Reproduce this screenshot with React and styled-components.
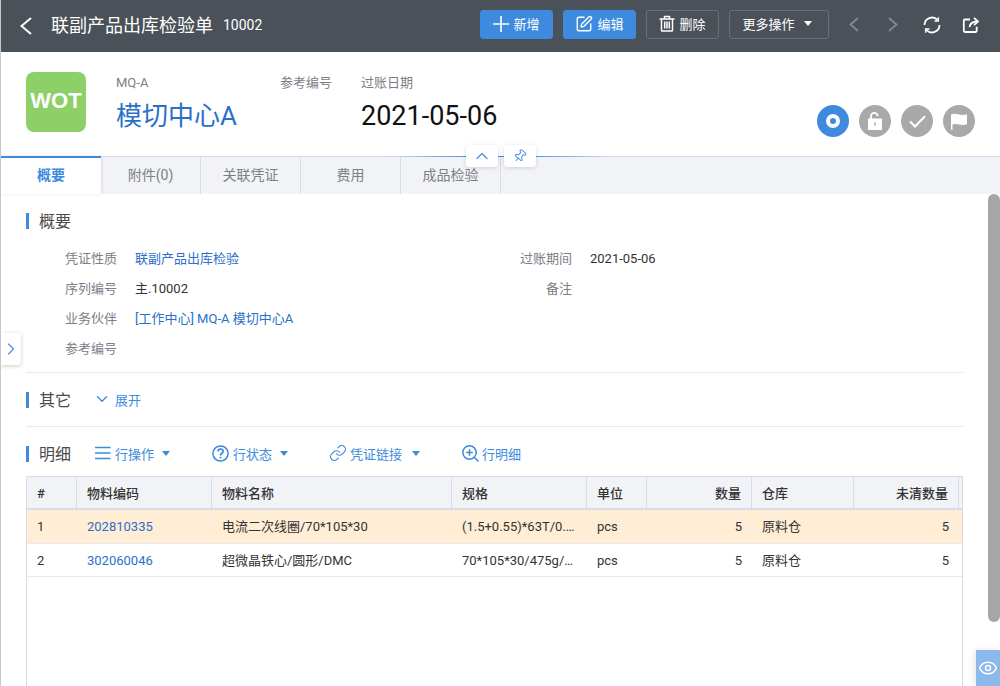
import styled, { createGlobalStyle } from 'styled-components';
import { ChevronDown, ChevronRight, ChevronUp, Eye, Link, Pin, SquarePen } from 'lucide-react';

const GlobalStyle = createGlobalStyle`
  html, body {
    margin: 0;
    padding: 0;
    height: 100%;
    overflow: hidden;
    background: #fff;
  }
  * { box-sizing: border-box; }
  body {
    font-family: Roboto, "Noto Sans CJK SC", sans-serif;
    font-size: 13px;
    color: #333;
  }
`;

const Page = styled.div`
  position: relative;
  display: flex;
  flex-direction: column;
  height: 686px;
  overflow: hidden;
  border-left: 1px solid #c8c8c8;
`;

const TopBar = styled.header`
  display: flex;
  align-items: center;
  flex: none;
  height: 52px;
  padding-left: 19px;
  background: #4b5159;
  color: #fff;
`;

const BackLink = styled.span`
  display: flex;
  width: 31px;
  color: #fff;
`;

const DocTitle = styled.h1`
  margin: 0;
  font-size: 18px;
  font-weight: 400;
  line-height: 50px;
`;

const DocNumber = styled.span`
  margin-left: 10px;
  margin-bottom: 2px;
  flex: 1;
  font-size: 14px;
`;

const TopButton = styled.button`
  display: flex;
  align-items: center;
  justify-content: center;
  gap: 4px;
  width: ${p => p.$width}px;
  height: 29px;
  margin: 0 10px 3px 0;
  padding: 0 ${p => p.$trim || 0}px 2px 0;
  border: 1px solid ${p => (p.$primary ? '#3d8ade' : '#6a7078')};
  border-radius: 3px;
  background: ${p => (p.$primary ? '#3d8ade' : 'transparent')};
  color: #fff;
  font-family: inherit;
  font-size: 13px;
`;

const Caret = styled.i`
  display: inline-block;
  width: 0;
  height: 0;
  margin-left: ${p => p.$gap || 4}px;
  border-left: 4px solid transparent;
  border-right: 4px solid transparent;
  border-top: 5px solid ${p => p.$color || '#fff'};
`;

const TopIcons = styled.div`
  display: flex;
  align-items: center;
  margin-left: 5px;
  padding-right: 19px;
  gap: 19px;
  margin-bottom: 3px;
`;

const TopIcon = styled.span`
  display: flex;
  width: 20px;
  justify-content: center;
  color: ${p => (p.$dim ? '#868a90' : '#fff')};
`;

const Hero = styled.section`
  position: relative;
  display: flex;
  flex: none;
  height: 104px;
  padding: 20px 25px 0;
`;

const Logo = styled.div`
  display: flex;
  align-items: center;
  justify-content: center;
  width: 60px;
  height: 60px;
  margin-right: 30px;
  padding-bottom: 2px;
  border-radius: 8px;
  background: #8dd068;
  color: #fff;
  font-family: "Liberation Sans", Arial, sans-serif;
  font-size: 22px;
  font-weight: 700;
`;

const HeroColumn = styled.div`
  width: ${p => p.$width}px;
`;

const HeroLabel = styled.div`
  height: 22px;
  line-height: 22px;
  font-size: 13px;
  color: #7b8088;
`;

const HeroValue = styled.div`
  margin-top: 6px;
  height: 32px;
  line-height: 32px;
  font-size: ${p => p.$size || 26}px;
  white-space: nowrap;
  color: ${p => (p.$link ? '#2a6fc9' : '#111')};
`;

const StatusList = styled.div`
  display: flex;
  gap: 10px;
  margin-left: auto;
  padding-top: 33px;
`;

const StatusDot = styled.span`
  display: flex;
  align-items: center;
  justify-content: center;
  width: 32px;
  height: 32px;
  border-radius: 50%;
  background: ${p => (p.$active ? '#3d8ade' : '#a9a9a9')};
`;

const HeroTools = styled.div`
  position: absolute;
  left: 465px;
  bottom: -11px;
  z-index: 3;
  display: flex;
  gap: 6px;
`;

const HeroTool = styled.span`
  display: flex;
  align-items: center;
  justify-content: center;
  width: 32px;
  height: 22px;
  border-radius: 3px;
  background: #fff;
  box-shadow: 0 1px 4px rgba(0, 0, 0, 0.14);
  color: #4a90e2;
`;

const TabBar = styled.nav`
  position: relative;
  display: flex;
  flex: none;
  height: 38px;
  background: #f2f3f7;
  border-top: 1px solid #d8dce8;
  &::before {
    content: '';
    position: absolute;
    left: 385px;
    top: -1px;
    width: 225px;
    height: 1px;
    background: linear-gradient(to right, rgba(61, 138, 222, 0) 0, #3d8ade 40%, #3d8ade 62%, rgba(61, 138, 222, 0) 100%);
  }
`;

const Tab = styled.span`
  position: relative;
  width: 100px;
  text-align: center;
  line-height: 37px;
  font-size: 14px;
  color: #7b8088;
  border-right: 1px solid #d8dce8;
`;

const ActiveTab = styled(Tab)`
  height: 38px;
  margin-top: -1px;
  border-top: 2px solid #3d8ade;
  border-right: 0;
  background: #fff;
  box-shadow: 1px 0 3px rgba(0, 0, 0, 0.1);
  font-weight: 700;
  line-height: 35px;
  color: #3d8ade;
`;

const Content = styled.main`
  display: flex;
  flex-direction: column;
  flex: 1;
  min-height: 0;
  padding: 16px 37px 0 25px;
`;

const SectionHead = styled.div`
  display: flex;
  align-items: center;
  height: 22px;
  flex: none;
`;

const SectionTitle = styled.h2`
  height: 16px;
  margin: 0 24px 0 0;
  padding-left: 10px;
  border-left: 3px solid #3d8ade;
  font-size: 16px;
  font-weight: 400;
  line-height: 17px;
  color: #4a4a4a;
`;

const Fields = styled.div`
  display: grid;
  grid-template-columns: 455px 1fr;
  margin-top: 11px;
  padding-bottom: 9px;
  border-bottom: 1px solid #e9e9ec;
`;

const FieldColumn = styled.div`
  display: flex;
  flex-direction: column;
`;

const Field = styled.div`
  display: flex;
  height: 30px;
  line-height: 31px;
  font-size: 13px;
`;

const FieldLabel = styled.span`
  width: 91px;
  margin-right: 18px;
  text-align: right;
  color: #7b8088;
`;

const FieldValue = styled.span`
  color: ${p => (p.$link ? '#2a6fc9' : '#333')};
`;

const Expand = styled.span`
  display: flex;
  align-items: center;
  gap: 4px;
  margin: 0 0 2px -2px;
  color: #3d8ade;
  font-size: 13px;
`;

const OtherBlock = styled.div`
  margin-top: 16px;
  padding-bottom: 15px;
  border-bottom: 1px solid #e9e9ec;
`;

const DetailHead = styled(SectionHead)`
  margin-top: 16px;
`;

const Action = styled.span`
  display: flex;
  align-items: center;
  gap: ${p => (p.$tight ? 3 : 4)}px;
  margin: 0 42px 2px 0;
  color: #3d8ade;
  font-size: 13px;
  white-space: nowrap;
`;

const LinkGlyph = styled(Link)`
  margin: 0 -1px;
`;

const TableBox = styled.div`
  flex: 1;
  margin-top: 11px;
  border: 1px solid #d8dce8;
  border-bottom: 0;
`;

const columns = '50px 135px 240px 135px 60px 105px 102px 105px 3px';

const Row = styled.div`
  display: grid;
  grid-template-columns: ${columns};
  height: ${p => (p.$head ? 33 : 33.5)}px;
  line-height: 33px;
  background: ${p => (p.$head ? '#f2f3f7' : p.$selected ? '#ffeed5' : '#fff')};
  border-bottom: ${p => (p.$head ? 2 : 1)}px solid ${p => (p.$head ? '#d8dce8' : '#e9e9ec')};
  color: #333;
  font-weight: ${p => (p.$head ? 500 : 400)};
`;

const Cell = styled.div`
  padding: 0 10px;
  overflow: hidden;
  white-space: nowrap;
  text-align: ${p => (p.$right ? 'right' : 'left')};
  color: ${p => (p.$link ? '#2a6fc9' : 'inherit')};
  ${p => p.$head && 'border-right: 1px solid #d8dce8;'}
`;

const SideToggle = styled.span`
  position: absolute;
  left: 0;
  top: 333px;
  display: flex;
  align-items: center;
  justify-content: center;
  width: 20px;
  height: 32px;
  border-radius: 0 3px 3px 0;
  background: #fff;
  box-shadow: 0 1px 4px rgba(0, 0, 0, 0.2);
  color: #4a90e2;
`;

const ScrollThumb = styled.span`
  position: absolute;
  right: 0;
  top: 194px;
  width: 12px;
  height: 428px;
  border-radius: 6px;
  background: #a6a6a6;
`;

const EyeButton = styled.span`
  position: absolute;
  right: 0;
  bottom: 0;
  display: flex;
  align-items: center;
  justify-content: center;
  width: 24px;
  height: 36px;
  background: #8cb9ec;
  box-shadow: -2px 0 6px rgba(0, 0, 0, 0.1);
  color: #fff;
`;

const Arrow = ({ dir, width = 10, height = 15, weight = 1.8 }) => (
  <svg width={width} height={height} viewBox={`0 0 ${width} ${height}`} fill="none" stroke="currentColor" strokeWidth={weight}>
    <path
      d={
        dir === 'left'
          ? `M${width - 1} 1L1.500 ${height / 2}L${width - 1} ${height - 1}`
          : `M1 1L${width - 1.5} ${height / 2}L1 ${height - 1}`
      }
    />
  </svg>
);

const PlusIcon = () => (
  <svg width="16" height="16" viewBox="0 0 16 16" stroke="currentColor" strokeWidth="1.6">
    <path d="M0 8h16M8 0v16" />
  </svg>
);

const TrashIcon = () => (
  <svg width="16" height="17" viewBox="0 0 16 17" fill="none" stroke="currentColor" strokeWidth="1.5">
    <path d="M0.5 4h15M5.500 4V1.500h5V4M2.500 4v11.200c0 .5.4.8.8.8h9.400c.4 0 .8-.3.8-.8V4M5.700 6.500v7M8 6.500v7M10.300 6.500v7" />
  </svg>
);

const RefreshIcon = () => (
  <svg width="18" height="18" viewBox="0 0 18 18" fill="none" stroke="currentColor" strokeWidth="1.800">
    <path d="M1.500 9a7.500 7.500 0 0 1 13-5" />
    <path d="M16.500 9a7.500 7.500 0 0 1-13 5" />
    <path d="M15.300 1.200V5H11.500M2.700 16.800V13h3.800" strokeWidth="1.500" />
  </svg>
);

const ShareIcon = () => (
  <svg width="18" height="18" viewBox="0 0 18 18" fill="none" stroke="currentColor" strokeWidth="1.800">
    <path d="M8 3.500H3a1.200 1.200 0 0 0-1.200 1.200v10.100A1.200 1.200 0 0 0 3 16h10.500a1.200 1.200 0 0 0 1.200-1.200v-4" />
    <path d="M7.500 11c.5-3.500 3-5.500 8-5.500" />
    <path d="M12 1.800 16 5.500l-4 3.700" />
  </svg>
);

const ListIcon = () => (
  <svg width="16" height="14" viewBox="0 0 16 14" stroke="currentColor" strokeWidth="1.4">
    <path d="M0 1.500h15.500M0 7h15.500M0 12.500h15.500" />
  </svg>
);

const HelpIcon = () => (
  <svg width="17" height="17" viewBox="0 0 17 17" fill="none" stroke="currentColor" strokeWidth="1.500">
    <circle cx="8.500" cy="8.500" r="7.600" />
    <path d="M6 6.600c0-1.500 1.200-2.400 2.600-2.400s2.500.9 2.500 2.200c0 1.900-2.600 1.900-2.600 4" strokeWidth="1.700" />
    <path d="M8.500 11.700v1.800" strokeWidth="1.700" />
  </svg>
);

const ZoomPlusIcon = () => (
  <svg width="17" height="17" viewBox="0 0 17 17" fill="none" stroke="currentColor" strokeWidth="1.500">
    <circle cx="7.500" cy="7.500" r="6.700" />
    <path d="M12.300 12.300 16.500 16.500M7.500 4.200v6.600M4.200 7.500h6.600" />
  </svg>
);

const RingIcon = () => (
  <svg width="14" height="14" viewBox="0 0 14 14">
    <circle cx="7" cy="7" r="5" fill="none" stroke="#fff" strokeWidth="4" />
  </svg>
);

const LockIcon = () => (
  <svg width="14" height="18" viewBox="0 0 14 18">
    <path d="M3 7V4.200a3.300 3.300 0 0 1 6.600 0" fill="none" stroke="#fff" strokeWidth="1.800" />
    <path d="M.5 6.500h13a.5.5 0 0 1 .5.5v10.500a.5.5 0 0 1-.5.5H.5a.5.5 0 0 1-.5-.5V7a.5.5 0 0 1 .5-.5z" fill="#fff" />
    <path d="M7 10.500v3" stroke="#a9a9a9" strokeWidth="1.500" />
  </svg>
);

const CheckIcon = () => (
  <svg width="17" height="13" viewBox="0 0 17 13">
    <path d="M1 6.500l5 5L16 1.200" fill="none" stroke="#fff" strokeWidth="2" />
  </svg>
);

const FlagIcon = () => (
  <svg width="16" height="17" viewBox="0 0 16 17">
    <path d="M0 1.500C2.500.4 5 .8 8 1.500s5.500.6 8-.3v10c-2.500 1-5 1-8 .3s-4.500-.7-6.500 0V17H0z" fill="#fff" />
  </svg>
);

const tabs = ['附件(0)', '关联凭证', '费用', '成品检验'];

const rows = [
  { id: 1, code: '202810335', name: '电流二次线圈/70*105*30', spec: '(1.5+0.55)*63T/0.…', selected: true },
  { id: 2, code: '302060046', name: '超微晶铁心/圆形/DMC', spec: '70*105*30/475g/…', selected: false },
];

export default function App() {
  return (
    <Page>
      <GlobalStyle />
      <TopBar>
        <BackLink>
          <Arrow dir="left" width={12} height={18} weight={2} />
        </BackLink>
        <DocTitle>联副产品出库检验单</DocTitle>
        <DocNumber>10002</DocNumber>
        <TopButton $primary $width={73}>
          <PlusIcon />
          新增
        </TopButton>
        <TopButton $primary $width={73}>
          <SquarePen size={18} strokeWidth={1.8} />
          编辑
        </TopButton>
        <TopButton $width={73}>
          <TrashIcon />
          删除
        </TopButton>
        <TopButton $width={100} $trim={4}>
          更多操作
          <Caret $gap={5} />
        </TopButton>
        <TopIcons>
          <TopIcon $dim>
            <Arrow dir="left" />
          </TopIcon>
          <TopIcon $dim>
            <Arrow dir="right" />
          </TopIcon>
          <TopIcon>
            <RefreshIcon />
          </TopIcon>
          <TopIcon>
            <ShareIcon />
          </TopIcon>
        </TopIcons>
      </TopBar>

      <Hero>
        <Logo>WOT</Logo>
        <HeroColumn $width={164}>
          <HeroLabel>MQ-A</HeroLabel>
          <HeroValue $link>模切中心A</HeroValue>
        </HeroColumn>
        <HeroColumn $width={81}>
          <HeroLabel>参考编号</HeroLabel>
        </HeroColumn>
        <HeroColumn $width={140}>
          <HeroLabel>过账日期</HeroLabel>
          <HeroValue $size={27}>2021-05-06</HeroValue>
        </HeroColumn>
        <StatusList>
          <StatusDot $active>
            <RingIcon />
          </StatusDot>
          <StatusDot>
            <LockIcon />
          </StatusDot>
          <StatusDot>
            <CheckIcon />
          </StatusDot>
          <StatusDot>
            <FlagIcon />
          </StatusDot>
        </StatusList>
        <HeroTools>
          <HeroTool>
            <ChevronUp size={20} strokeWidth={1.5} />
          </HeroTool>
          <HeroTool>
            <Pin size={14} strokeWidth={1.7} style={{ transform: 'rotate(40deg)' }} />
          </HeroTool>
        </HeroTools>
      </Hero>

      <TabBar>
        <ActiveTab>概要</ActiveTab>
        {tabs.map(tab => (
          <Tab key={tab}>{tab}</Tab>
        ))}
      </TabBar>

      <Content>
        <SectionHead>
          <SectionTitle>概要</SectionTitle>
        </SectionHead>
        <Fields>
          <FieldColumn>
            <Field>
              <FieldLabel>凭证性质</FieldLabel>
              <FieldValue $link>联副产品出库检验</FieldValue>
            </Field>
            <Field>
              <FieldLabel>序列编号</FieldLabel>
              <FieldValue>主.10002</FieldValue>
            </Field>
            <Field>
              <FieldLabel>业务伙伴</FieldLabel>
              <FieldValue $link>[工作中心] MQ-A 模切中心A</FieldValue>
            </Field>
            <Field>
              <FieldLabel>参考编号</FieldLabel>
            </Field>
          </FieldColumn>
          <FieldColumn>
            <Field>
              <FieldLabel>过账期间</FieldLabel>
              <FieldValue>2021-05-06</FieldValue>
            </Field>
            <Field>
              <FieldLabel>备注</FieldLabel>
            </Field>
          </FieldColumn>
        </Fields>

        <OtherBlock>
          <SectionHead>
            <SectionTitle>其它</SectionTitle>
            <Expand>
              <ChevronDown size={18} strokeWidth={1.8} />
              展开
            </Expand>
          </SectionHead>
        </OtherBlock>

        <DetailHead>
          <SectionTitle>明细</SectionTitle>
          <Action>
            <ListIcon />
            行操作
            <Caret $color="#3d8ade" />
          </Action>
          <Action>
            <HelpIcon />
            行状态
            <Caret $color="#3d8ade" />
          </Action>
          <Action>
            <LinkGlyph size={18} strokeWidth={1.6} />
            凭证链接
            <Caret $color="#3d8ade" $gap={6} />
          </Action>
          <Action $tight>
            <ZoomPlusIcon />
            行明细
          </Action>
        </DetailHead>

        <TableBox>
          <Row $head>
            <Cell $head>#</Cell>
            <Cell $head>物料编码</Cell>
            <Cell $head>物料名称</Cell>
            <Cell $head>规格</Cell>
            <Cell $head>单位</Cell>
            <Cell $head $right>数量</Cell>
            <Cell $head>仓库</Cell>
            <Cell $head $right>未清数量</Cell>
            <Cell />
          </Row>
          {rows.map(row => (
            <Row key={row.id} $selected={row.selected}>
              <Cell>{row.id}</Cell>
              <Cell $link>{row.code}</Cell>
              <Cell>{row.name}</Cell>
              <Cell>{row.spec}</Cell>
              <Cell>pcs</Cell>
              <Cell $right>5</Cell>
              <Cell>原料仓</Cell>
              <Cell $right>5</Cell>
              <Cell />
            </Row>
          ))}
        </TableBox>
      </Content>

      <SideToggle>
        <ChevronRight size={24} strokeWidth={1.4} />
      </SideToggle>
      <ScrollThumb />
      <EyeButton>
        <Eye size={20} strokeWidth={1.9} />
      </EyeButton>
    </Page>
  );
}
